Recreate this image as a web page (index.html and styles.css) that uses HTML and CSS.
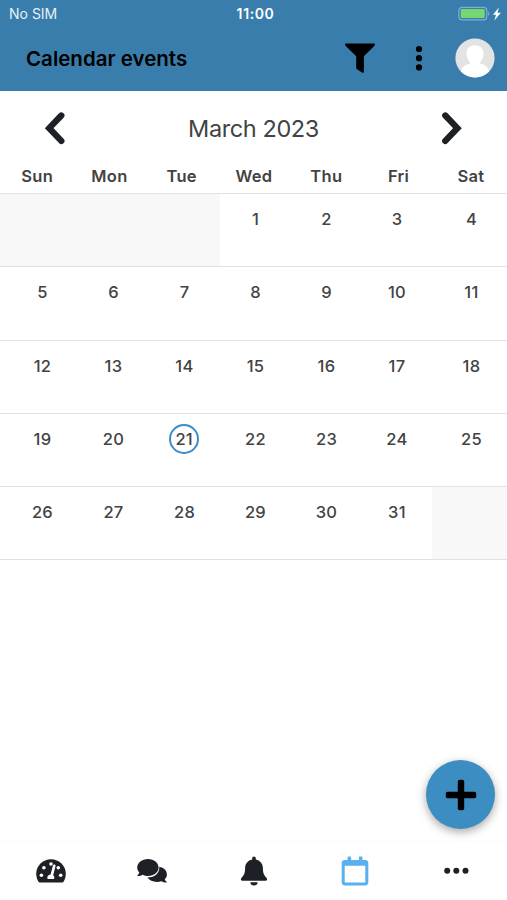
FILE: index.html
```html
<!DOCTYPE html>
<html lang="en">
<head>
  <meta charset="UTF-8">
  <meta name="viewport" content="width=device-width, initial-scale=1.0">
  <title>Calendar events</title>
  <link rel="stylesheet" href="styles.css">
</head>
<body>
  <header class="header">
    <div class="status-bar">
      <span class="carrier">No SIM</span>
      <span class="time">11:00</span>
      <span class="power">
        <svg width="44" height="16" viewBox="0 0 44 16">
          <rect x="0.8" y="1.3" width="28" height="12.6" rx="3.4" fill="none" stroke="#7fb0cd" stroke-width="1.2"/>
          <rect x="2.7" y="3.1" width="24" height="9" rx="1.5" fill="#76d873"/>
          <path d="M30.3 5.3q1.700 2.200 0 4.600z" fill="#9fc4d9"/>
          <path d="M40.900 1.400L34.900 8.700h3.100l-1.600 5.700 6.500-7.700h-3.400z" fill="#fff"/>
        </svg>
      </span>
    </div>
    <div class="toolbar">
      <h1 class="title">Calendar events</h1>
      <button class="icon-button filter" aria-label="Filter">
        <svg width="30" height="30" viewBox="0 0 30 30">
          <path d="M1.300 0.400h27.400c1.200 0 1.600 1.400.8 2.300L18.900 13.200v15.200c0 1.200-1 1.600-1.900 1l-5-3.200c-.5-.4-.8-.8-.8-1.400V13.200L.5 2.700C-.3 1.800.1.4 1.300.4z"/>
        </svg>
      </button>
      <button class="icon-button more" aria-label="More">
        <svg width="8" height="26" viewBox="0 0 8 26">
          <circle cx="4" cy="4" r="3.100"/>
          <circle cx="4" cy="13.200" r="3.100"/>
          <circle cx="4" cy="22.400" r="3.100"/>
        </svg>
      </button>
      <svg class="avatar" width="40" height="40" viewBox="0 0 40 40">
        <clipPath id="round"><circle cx="20" cy="20" r="19.600"/></clipPath>
        <g clip-path="url(#round)">
          <rect width="40" height="40" fill="#e3e3e3"/>
          <path d="M20 7.300c5 0 8.500 3 8.500 8.200 0 4.200-1.500 6.500-3.500 8.500v1.500c5.500 1.300 9.500 4 11 15H4c1.500-11 5.500-13.700 11-15V24c-2-2-3.500-4.300-3.500-8.500 0-5.200 3.500-8.200 8.500-8.200z" fill="#fff"/>
        </g>
      </svg>
    </div>
  </header>

  <main class="calendar">
    <div class="month-nav">
      <svg class="arrow" width="22" height="34" viewBox="0 0 22 34">
        <path d="M17.300 4.500L5.200 17.200l12.100 12.700"/>
      </svg>
      <h2 class="month">March 2023</h2>
      <svg class="arrow" width="22" height="34" viewBox="0 0 22 34">
        <path d="M4.300 4.500l12.100 12.700L4.300 29.900"/>
      </svg>
    </div>
    <div class="weekdays">
      <span>Sun</span><span>Mon</span><span>Tue</span><span>Wed</span><span>Thu</span><span>Fri</span><span>Sat</span>
    </div>
    <div class="week">
      <div class="day blank"></div>
      <div class="day blank"></div>
      <div class="day blank"></div>
      <div class="day"><span>1</span></div>
      <div class="day"><span>2</span></div>
      <div class="day"><span>3</span></div>
      <div class="day"><span>4</span></div>
    </div>
    <div class="week">
      <div class="day"><span>5</span></div>
      <div class="day"><span>6</span></div>
      <div class="day"><span>7</span></div>
      <div class="day"><span>8</span></div>
      <div class="day"><span>9</span></div>
      <div class="day"><span>10</span></div>
      <div class="day"><span>11</span></div>
    </div>
    <div class="week">
      <div class="day"><span>12</span></div>
      <div class="day"><span>13</span></div>
      <div class="day"><span>14</span></div>
      <div class="day"><span>15</span></div>
      <div class="day"><span>16</span></div>
      <div class="day"><span>17</span></div>
      <div class="day"><span>18</span></div>
    </div>
    <div class="week">
      <div class="day"><span>19</span></div>
      <div class="day"><span>20</span></div>
      <div class="day today"><span>21</span></div>
      <div class="day"><span>22</span></div>
      <div class="day"><span>23</span></div>
      <div class="day"><span>24</span></div>
      <div class="day"><span>25</span></div>
    </div>
    <div class="week">
      <div class="day"><span>26</span></div>
      <div class="day"><span>27</span></div>
      <div class="day"><span>28</span></div>
      <div class="day"><span>29</span></div>
      <div class="day"><span>30</span></div>
      <div class="day"><span>31</span></div>
      <div class="day blank"></div>
    </div>
  </main>

  <button class="fab" aria-label="New event">
    <svg width="32" height="32" viewBox="0 0 32 32">
      <rect x="12.800" y="0.800" width="6.400" height="30.400" rx="1.800"/>
      <rect x="0.800" y="12.800" width="30.400" height="6.400" rx="1.800"/>
    </svg>
  </button>

  <nav class="tabs">
    <a class="tab">
      <!-- dashboard -->
      <svg width="30" height="30" viewBox="0 0 30 30">
        <path d="M15 3.300C6.700 3.300.2 9.800.2 17.800c0 2.900.8 5.500 2.100 7.700.4.600.9.900 1.600.9h22.200c.7 0 1.200-.3 1.600-.9 1.300-2.200 2.100-4.800 2.100-7.700C29.800 9.800 23.300 3.300 15 3.300z"/>
        <g fill="#fff">
          <circle cx="5.400" cy="19.300" r="1.800"/>
          <circle cx="7.900" cy="11.800" r="1.800"/>
          <circle cx="15" cy="8" r="1.800"/>
          <circle cx="22.300" cy="11.800" r="1.800"/>
          <circle cx="24.700" cy="19.300" r="1.800"/>
          <path d="M18.500 8.500c.8.200 1.200.7 1 1.500l-2.300 9.300c1.100.9 1.500 2.100.8 3.600h-6.300c-.9-2.300.4-4.300 2.900-4.500l2.400-9.100c.2-.7.700-1 1.500-.8z"/>
        </g>
      </svg>
    </a>
    <a class="tab">
      <!-- messages -->
      <svg width="30" height="30" viewBox="0 0 30 30">
        <path d="M22.300 10.800c4.600.8 7.600 3.700 7.600 7.600 0 1.900-.8 3.600-2.200 4.900.4 1.100 1.100 1.900 2 2.600.3.300.1.700-.3.700-2 0-3.700-.7-4.900-1.400-5.500 1.900-11.800.1-14.100-3.600 7.400.1 12.500-4.800 11.900-10.800z"/>
        <path d="M11 2.900C4.900 2.900.2 6.800.2 11.500c0 2 .9 3.700 2.200 5.100C2 17.700 1.300 18.700.5 19.300c-.4.400-.2.800.3.800 2 0 3.600-.6 4.900-1.400 1.600.700 3.400 1.300 5.300 1.300 6 0 10.600-3.900 10.600-8.500S17 2.900 11 2.900z"/>
      </svg>
    </a>
    <a class="tab">
      <!-- notifications -->
      <svg width="30" height="30" viewBox="0 0 30 30">
        <path d="M15 .4c-1 0-1.800.8-1.800 1.800v1.200C9 4.200 6.100 7.600 6.100 12c0 5.200-1.300 7.400-3.300 9.500-.7.700-.9 1.100-.9 1.700 0 .9.700 1.500 1.700 1.500h22.800c1 0 1.700-.6 1.700-1.500 0-.6-.2-1-.9-1.700-2-2.100-3.300-4.300-3.300-9.500 0-4.400-2.900-7.800-7.100-8.600V2.200c0-1-.8-1.800-1.800-1.800z"/>
        <path d="M11.300 26.200h7.400c0 2-1.600 3.300-3.700 3.300s-3.700-1.300-3.700-3.300z"/>
      </svg>
    </a>
    <a class="tab active">
      <!-- calendar -->
      <svg width="30" height="30" viewBox="0 0 30 30">
        <path fill-rule="evenodd" d="M4.600 4.100h3V1.200c0-.5.300-.8.800-.8h1.900c.5 0 .8.300.8.800v2.900h7.800V1.200c0-.5.300-.8.800-.8h1.900c.5 0 .8.300.8.800v2.900h3c1.700 0 2.900 1.200 2.900 2.900v19.600c0 1.700-1.200 2.900-2.900 2.900H4.600c-1.700 0-2.900-1.200-2.900-2.900V7c0-1.700 1.200-2.900 2.900-2.900zM4.700 9.700v16.500c0 .2.100.4.400.4h19.800c.3 0 .4-.2.400-.4V9.700z"/>
      </svg>
    </a>
    <a class="tab">
      <!-- more -->
      <svg width="30" height="30" viewBox="0 0 30 30">
        <circle cx="6.200" cy="14.800" r="3"/>
        <circle cx="15.300" cy="14.800" r="3"/>
        <circle cx="24.500" cy="14.800" r="3"/>
      </svg>
    </a>
  </nav>
</body>
</html>
```
FILE: styles.css
```css
body {
  margin: 0;
  height: 100vh;
  display: flex;
  flex-direction: column;
  position: relative;
  overflow: hidden;
  background: #fff;
  color: #434343;
  font-family: Inter, Roboto, sans-serif;
}

.header {
  height: 91px;
  background: #387dab;
  flex-shrink: 0;
}

.status-bar {
  display: grid;
  grid-template-columns: 1fr auto 1fr;
  align-items: center;
  height: 27px;
  padding: 0 5px 0 9px;
  color: #e6f1f7;
  font-size: 14px;
}

.time {
  color: #fff;
  font-weight: 600;
  letter-spacing: 0.6px;
}

.power {
  display: flex;
  justify-content: flex-end;
}

.toolbar {
  display: flex;
  align-items: center;
  height: 62px;
  padding: 0 12px 0 26px;
}

.title {
  flex: 1;
  margin: 0;
  color: #000;
  font-size: 20.5px;
  font-weight: 600;
}

.icon-button {
  display: flex;
  padding: 0;
  border: 0;
  background: none;
}

.filter {
  margin-right: 40px;
}

.more {
  margin-right: 32px;
}

.month-nav {
  display: flex;
  align-items: center;
  justify-content: space-between;
  height: 74px;
  padding: 0 44px;
}

.arrow path {
  fill: none;
  stroke: #1d2125;
  stroke-width: 6.3;
  stroke-linecap: round;
}

.month {
  margin: 0;
  padding-top: 1px;
  font-size: 23.5px;
  font-weight: 400;
  letter-spacing: -0.4px;
}

.weekdays {
  display: grid;
  grid-template-columns: repeat(7, 1fr);
  height: 28px;
  padding-left: 1px;
  font-size: 16.5px;
  font-weight: 600;
  letter-spacing: 0.3px;
  line-height: 22px;
  text-align: center;
}

.week {
  display: grid;
  grid-template-columns: 78px 71px 71px 71px 71px 70px 75px;
  height: 73.25px;
  box-sizing: border-box;
  border-top: 1px solid #e0e1e2;
}

.week:last-child {
  border-bottom: 1px solid #e0e1e2;
  height: 74.25px;
}

.day {
  display: flex;
  justify-content: center;
  align-items: flex-start;
  padding-top: 10px;
  font-size: 16.5px;
  font-weight: 500;
  letter-spacing: 0.3px;
}

.day:first-child {
  padding-left: 7px;
}

.day:last-child {
  padding-left: 4px;
}

.day span {
  width: 30px;
  height: 30px;
  box-sizing: border-box;
  line-height: 30px;
  text-align: center;
}

.blank {
  background: #f8f8f8;
}

.today span {
  margin-right: 1px;
  border: 2px solid #3a8dc3;
  border-radius: 50%;
  line-height: 26px;
  letter-spacing: 0;
}

.fab {
  position: absolute;
  right: 12px;
  bottom: 71px;
  display: flex;
  justify-content: center;
  align-items: center;
  width: 69px;
  height: 69px;
  padding: 0;
  border: 0;
  border-radius: 50%;
  background: #3c8dc1;
  box-shadow: 0 3px 10px rgba(0, 0, 0, 0.35);
}

.tabs {
  display: flex;
  height: 58px;
  margin-top: auto;
  border-top: 1px solid #fafafa;
}

.tab {
  display: flex;
  flex: 1;
  justify-content: center;
  align-items: center;
  fill: #1d2125;
}

.active {
  fill: #58b0ee;
}
```
